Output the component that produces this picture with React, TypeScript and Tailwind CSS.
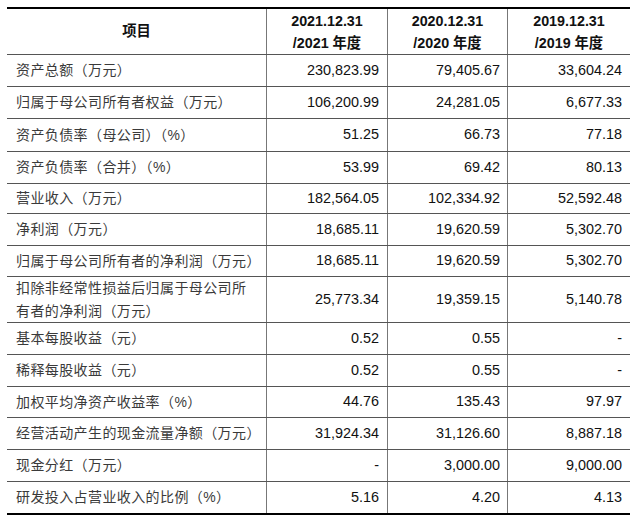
import React from "react";

type Row = { label: string[]; a: string; b: string; c: string; h: string };

const rows: Row[] = [
  { label: ["资产总额（万元）"], a: "230,823.99", b: "79,405.67", c: "33,604.24", h: "h-[32px]" },
  { label: ["归属于母公司所有者权益（万元）"], a: "106,200.99", b: "24,281.05", c: "6,677.33", h: "h-[32px]" },
  { label: ["资产负债率（母公司）（%）"], a: "51.25", b: "66.73", c: "77.18", h: "h-[33px]" },
  { label: ["资产负债率（合并）（%）"], a: "53.99", b: "69.42", c: "80.13", h: "h-[32px]" },
  { label: ["营业收入（万元）"], a: "182,564.05", b: "102,334.92", c: "52,592.48", h: "h-[30px]" },
  { label: ["净利润（万元）"], a: "18,685.11", b: "19,620.59", c: "5,302.70", h: "h-[32px]" },
  { label: ["归属于母公司所有者的净利润（万元）"], a: "18,685.11", b: "19,620.59", c: "5,302.70", h: "h-[31px]" },
  { label: ["扣除非经常性损益后归属于母公司所", "有者的净利润（万元）"], a: "25,773.34", b: "19,359.15", c: "5,140.78", h: "h-[46px]" },
  { label: ["基本每股收益（元）"], a: "0.52", b: "0.55", c: "-", h: "h-[32px]" },
  { label: ["稀释每股收益（元）"], a: "0.52", b: "0.55", c: "-", h: "h-[32px]" },
  { label: ["加权平均净资产收益率（%）"], a: "44.76", b: "135.43", c: "97.97", h: "h-[31px]" },
  { label: ["经营活动产生的现金流量净额（万元）"], a: "31,924.34", b: "31,126.60", c: "8,887.18", h: "h-[32px]" },
  { label: ["现金分红（万元）"], a: "-", b: "3,000.00", c: "9,000.00", h: "h-[32px]" },
  { label: ["研发投入占营业收入的比例（%）"], a: "5.16", b: "4.20", c: "4.13", h: "h-[31px]" },
];

const font = { fontFamily: '"Liberation Sans", "Noto Sans CJK SC", sans-serif' };

export default function App() {
  return (
    <div className="w-[640px] h-[522px] bg-white pt-[7px] pl-[7px]" style={font}>
      <div className="w-[623px] border-t-2 border-b-2 border-black">
        <div className="flex h-[46px] border-b border-[#555]">
          <div className="w-[260px] border-r border-[#777] flex items-center justify-center font-bold text-[14.3px] text-[#111]">
            项目
          </div>
          {[
            ["2021.12.31", "/2021 年度"],
            ["2020.12.31", "/2020 年度"],
            ["2019.12.31", "/2019 年度"],
          ].map((h, i) => (
            <div
              key={i}
              className={`${i === 0 ? "w-[121px]" : i === 1 ? "w-[120px]" : "w-[122px]"} ${i < 2 ? "border-r border-[#777]" : ""} flex flex-col items-center justify-center font-bold text-[14.3px] leading-[22px] text-[#111]`}
            >
              <span>{h[0]}</span>
              <span>{h[1]}</span>
            </div>
          ))}
        </div>
        {rows.map((r, i) => (
          <div key={i} className={`flex ${r.h} ${i < rows.length - 1 ? "border-b border-[#555]" : ""}`}>
            <div className="w-[260px] border-r border-[#777] flex flex-col justify-center pl-[9px] text-[14px] tracking-[0.4px] leading-[23px] text-[#3a3a3a]">
              {r.label.map((l, j) => (
                <span key={j}>{l}</span>
              ))}
            </div>
            <div className="w-[121px] border-r border-[#777] flex items-center justify-end pr-[8px] text-[14.4px] text-[#111]">
              {r.a}
            </div>
            <div className="w-[120px] border-r border-[#777] flex items-center justify-end pr-[7px] text-[14.4px] text-[#111]">
              {r.b}
            </div>
            <div className="w-[122px] flex items-center justify-end pr-[8px] text-[14.4px] text-[#111]">
              {r.c}
            </div>
          </div>
        ))}
      </div>
    </div>
  );
}
